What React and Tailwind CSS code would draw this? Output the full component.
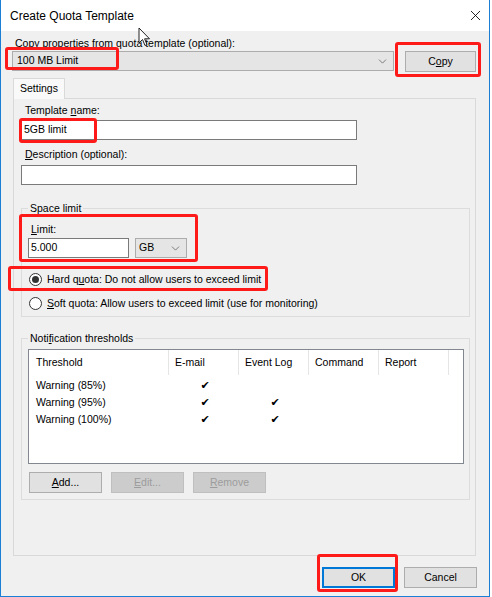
import { ChevronDown, X } from 'lucide-react'

const FONT = { fontFamily: '"Liberation Sans", Arial, sans-serif' }

const ROWS = [
  { name: 'Warning (85%)', email: true, log: false },
  { name: 'Warning (95%)', email: true, log: true },
  { name: 'Warning (100%)', email: true, log: true },
]

function Btn({ children, w = 'w-[72px]', disabled }) {
  return (
    <div
      className={`${w} h-[21px] flex items-center justify-center border ${
        disabled ? 'bg-[#cccccc] border-[#bfbfbf] text-[#9c9c9c]' : 'bg-[#e1e1e1] border-[#adadad] text-black'
      }`}
    >
      {children}
    </div>
  )
}

function Radio({ checked, children }) {
  return (
    <div className="flex items-center h-[13px] pl-[7px] gap-[5px]">
      <div className="w-[13px] h-[13px] rounded-full border border-[#333] bg-white flex items-center justify-center">
        {checked && <div className="w-[7px] h-[7px] rounded-full bg-[#333]" />}
      </div>
      <span className="leading-[13px]">{children}</span>
    </div>
  )
}

function Check() {
  return (
    <span className="text-[11px] leading-[17px]" style={{ fontFamily: '"DejaVu Sans", sans-serif' }}>
      ✔
    </span>
  )
}

function RedBox({ className }) {
  return <div className={`absolute border-[3px] border-[#ff1a1a] rounded-[3px] ${className}`} />
}

export default function App() {
  return (
    <div className="relative w-[492px] h-[597px] bg-white overflow-hidden text-[10.5px] text-black" style={FONT}>
      <div className="w-[490px] h-[597px] flex flex-col border-x border-b border-[#1c7fd6]">
        {/* title bar */}
        <div className="h-[31px] bg-white flex items-center justify-between pl-[9px] pr-[5px]">
          <span className="text-[12px]">Create Quota Template</span>
          <X size={17} strokeWidth={1.2} className="text-black" />
        </div>

        <div className="flex-1 bg-[#f0f0f0] flex flex-col">
          <div className="h-[20px] pt-[6px] pl-[14px] leading-[13px]">Copy properties from quota template (optional):</div>
          <div className="flex pl-[11px] gap-[11px] h-[20px]">
            <div className="w-[382px] h-[20px] bg-[#e5e5e5] border border-[#acacac] flex items-center justify-between pl-[4px] pr-[4px]">
              <span>100 MB Limit</span>
              <ChevronDown size={13} strokeWidth={1.2} className="text-[#444]" />
            </div>
            <Btn w="w-[71px]">
              C<span className="underline">o</span>py
            </Btn>
          </div>

          {/* tab */}
          <div className="mt-[7px] ml-[12px] w-[52px] h-[21px] bg-[#f9f9f9] border border-b-0 border-[#d9d9d9] flex items-center justify-center relative z-10">
            Settings
          </div>
          <div className="ml-[12px] -mt-[1px] w-[463px] h-[458px] border border-[#d9d9d9] bg-[#f0f0f0] pl-[7px] pt-[5px] flex flex-col">
            <div className="leading-[13px] ml-[4px]">
              Template <span className="underline">n</span>ame:
            </div>
            <div className="mt-[3px] w-[336px] h-[20px] bg-white border border-[#7a7a7a] flex items-center pl-[2px]">5GB limit</div>
            <div className="mt-[8px] leading-[13px] ml-[4px]">
              <span className="underline">D</span>escription (optional):
            </div>
            <div className="mt-[4px] w-[336px] h-[20px] bg-white border border-[#7a7a7a]" />

            {/* space limit */}
            <fieldset className="mt-[17px] w-[449px] border border-[#dcdcdc] pb-[6px]">
              <legend className="ml-[6px] px-[2px] leading-[13px]">Space limit</legend>
              <div className="pl-[9px] pt-[8px] leading-[13px]">
                <span className="underline">L</span>imit:
              </div>
              <div className="flex gap-[6px] pl-[6px] mt-[2px]">
                <div className="w-[101px] h-[20px] bg-white border border-[#7a7a7a] flex items-center pl-[2px]">5.000</div>
                <div className="w-[52px] h-[20px] bg-[#e5e5e5] border border-[#acacac] flex items-center justify-between pl-[3px] pr-[4px]">
                  <span>GB</span>
                  <ChevronDown size={13} strokeWidth={1.2} className="text-[#444]" />
                </div>
              </div>
              <div className="mt-[15px]">
                <Radio checked>
                  Hard q<span className="underline">u</span>ota: Do not allow users to exceed limit
                </Radio>
              </div>
              <div className="mt-[11px]">
                <Radio>
                  <span className="underline">S</span>oft quota: Allow users to exceed limit (use for monitoring)
                </Radio>
              </div>
            </fieldset>

            {/* notification thresholds */}
            <fieldset className="mt-[15px] w-[449px] border border-[#dcdcdc] pb-[6px]">
              <legend className="ml-[6px] px-[2px] leading-[13px]">
                Noti<span className="underline">f</span>ication thresholds
              </legend>
              <div className="ml-[6px] mt-[4px] w-[436px] h-[115px] bg-white border border-[#828790]">
                <div className="flex h-[25px] items-center">
                  <div className="w-[140px] h-full pl-[7px] flex items-center border-r border-[#e5e5e5]">Threshold</div>
                  <div className="w-[70px] h-full pl-[6px] flex items-center border-r border-[#e5e5e5]">E-mail</div>
                  <div className="w-[70px] h-full pl-[6px] flex items-center border-r border-[#e5e5e5]">Event Log</div>
                  <div className="w-[70px] h-full pl-[6px] flex items-center border-r border-[#e5e5e5]">Command</div>
                  <div className="w-[70px] h-full pl-[6px] flex items-center border-r border-[#e5e5e5]">Report</div>
                </div>
                <div className="pt-[2px]">
                  {ROWS.map((r) => (
                    <div key={r.name} className="flex h-[17px] items-center">
                      <div className="w-[141px] pl-[7px]">{r.name}</div>
                      <div className="w-[70px] flex justify-center">{r.email && <Check />}</div>
                      <div className="w-[70px] flex justify-center">{r.log && <Check />}</div>
                    </div>
                  ))}
                </div>
              </div>
              <div className="flex gap-[9px] ml-[7px] mt-[8px]">
                <Btn w="w-[73px]">
                  <span className="underline">A</span>dd...
                </Btn>
                <Btn w="w-[73px]" disabled>
                  <span className="underline">E</span>dit...
                </Btn>
                <Btn w="w-[73px]" disabled>
                  <span className="underline">R</span>emove
                </Btn>
              </div>
            </fieldset>
          </div>

          <div className="flex justify-end gap-[9px] pr-[12px] mt-[11px]">
            <div className="w-[73px] h-[21px] flex items-center justify-center bg-[#e1e1e1] border-2 border-[#0078d7]">OK</div>
            <Btn w="w-[73px]">Cancel</Btn>
          </div>
        </div>
      </div>

      {/* mouse pointer */}
      <svg className="absolute left-[138px] top-[27px]" width="13" height="20" viewBox="0 0 13 20">
        <path d="M1 1 L1 16 L4.5 12.5 L7 18.5 L9 17.6 L6.6 11.8 L11.5 11.8 Z" fill="white" stroke="#222" strokeWidth="1" strokeLinejoin="miter" />
      </svg>

      {/* red annotations */}
      <RedBox className="left-[5px] top-[47px] w-[114px] h-[23px]" />
      <RedBox className="left-[395px] top-[42px] w-[86px] h-[35px]" />
      <RedBox className="left-[19px] top-[118px] w-[78px] h-[25px]" />
      <RedBox className="left-[19px] top-[214px] w-[179px] h-[48px]" />
      <RedBox className="left-[8px] top-[266px] w-[260px] h-[25px]" />
      <RedBox className="left-[317px] top-[554px] w-[81px] h-[38px]" />
    </div>
  )
}
